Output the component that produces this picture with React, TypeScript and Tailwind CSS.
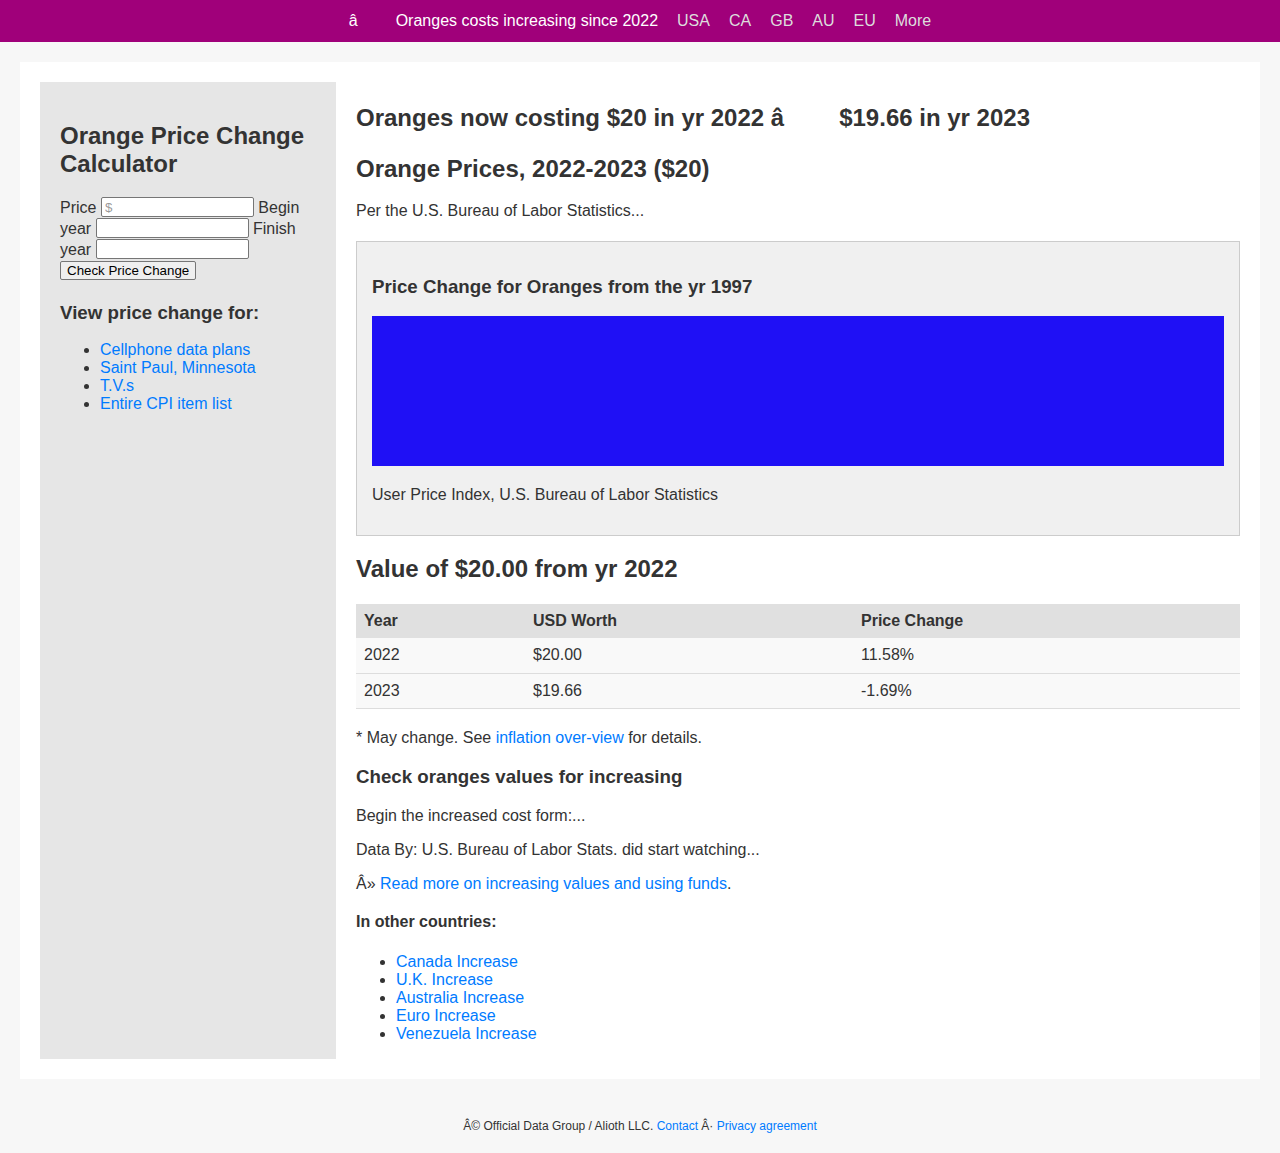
const links = ['Cellphone data plans', 'Saint Paul, Minnesota', 'T.V.s', 'Entire CPI item list'];
const countries = ['Canada Increase', 'U.K. Increase', 'Australia Increase', 'Euro Increase', 'Venezuela Increase'];
const rows = [
  { year: '2022', worth: '$20.00', change: '11.58%' },
  { year: '2023', worth: '$19.66', change: '-1.69%' },
];

function TopBar() {
  return (
    <div className="h-[42px] bg-[#a0007a] flex items-center justify-center text-[16px] leading-[18px]">
      <span className="text-white">â</span>
      <span className="inline-block w-[38px]" />
      <span className="text-white">Oranges costs increasing since 2022</span>
      {['USA', 'CA', 'GB', 'AU', 'EU', 'More'].map((n) => (
        <a key={n} className="ml-[19px] text-[#dddddd]">
          {n}
        </a>
      ))}
    </div>
  );
}

function Sidebar() {
  const input = 'inline-block align-top h-[20px] w-[153px] border border-[#767676] bg-white px-[3px] text-[13.33px] rounded-[2px]';
  return (
    <aside className="w-[296px] shrink-0 bg-[#e6e6e6] px-[20px] pt-[20px]">
      <h2 className="mt-[20px] text-[24px] leading-[28px] font-bold">Orange Price Change Calculator</h2>
      <form className="mt-[19px] text-[16px] leading-[21px]">
        Price <input className={input} placeholder="$" /> Begin year <input className={input} /> Finish year{' '}
        <input className={input} />{' '}
        <button
          type="button"
          className="inline-block align-top mt-[1px] h-[19px] px-[6px] border border-[#767676] bg-[#efefef] rounded-[2px] text-[13.33px] leading-[15px] text-black"
        >
          Check Price Change
        </button>
      </form>
      <h3 className="mt-[21px] text-[18.72px] leading-[22px] font-bold">View price change for:</h3>
      <ul className="mt-[17px] pl-[40px] list-disc leading-[18px]">
        {links.map((l) => (
          <li key={l}>
            <a className="text-[#007bff]">{l}</a>
          </li>
        ))}
      </ul>
    </aside>
  );
}

function Chart() {
  return (
    <div className="mt-[21px] border border-[#cccccc] bg-[#f0f0f0] px-[15px] pb-[31px]">
      <h3 className="mt-[34px] text-[18.72px] leading-[22px] font-bold">Price Change for Oranges from the yr 1997</h3>
      <svg className="mt-[18px] block w-full h-[150px]" preserveAspectRatio="none" viewBox="0 0 100 100">
        <rect x="0" y="0" width="100" height="100" fill="#1f10f5" />
      </svg>
      <p className="mt-[20px] leading-[18px]">User Price Index, U.S. Bureau of Labor Statistics</p>
    </div>
  );
}

function Main() {
  return (
    <main className="flex-1 min-w-0 ml-[20px] text-[16px]">
      <h1 className="mt-[22px] text-[24px] leading-[28px] font-bold whitespace-nowrap">
        Oranges now costing $20 in yr 2022 â<span className="inline-block w-[55px]" />$19.66 in yr 2023
      </h1>
      <h2 className="mt-[23px] text-[24px] leading-[28px] font-bold">Orange Prices, 2022-2023 ($20)</h2>
      <p className="mt-[19px] leading-[18px]">Per the U.S. Bureau of Labor Statistics...</p>
      <Chart />
      <h2 className="mt-[19px] text-[24px] leading-[28px] font-bold">Value of $20.00 from yr 2022</h2>
      <table className="mt-[21px] w-full border-collapse text-left">
        <thead>
          <tr className="bg-[#e0e0e0] h-[34px]">
            <th className="w-[169px] px-[8px] font-bold">Year</th>
            <th className="w-[328px] px-[8px] font-bold">USD Worth</th>
            <th className="px-[8px] font-bold">Price Change</th>
          </tr>
        </thead>
        <tbody>
          {rows.map((r) => (
            <tr key={r.year} className="bg-[#f9f9f9] h-[35px] border-b border-[#dddddd]">
              <td className="px-[8px]">{r.year}</td>
              <td className="px-[8px]">{r.worth}</td>
              <td className="px-[8px]">{r.change}</td>
            </tr>
          ))}
        </tbody>
      </table>
      <p className="mt-[20px] leading-[18px]">
        * May change. See <a className="text-[#007bff]">inflation over-view</a> for details.
      </p>
      <h3 className="mt-[19px] text-[18.72px] leading-[22px] font-bold">Check oranges values for increasing</h3>
      <p className="mt-[19px] leading-[18px]">Begin the increased cost form:...</p>
      <p className="mt-[16px] leading-[18px]">Data By: U.S. Bureau of Labor Stats. did start watching...</p>
      <p className="mt-[16px] leading-[18px]">
        Â» <a className="text-[#007bff]">Read more on increasing values and using funds</a>.
      </p>
      <p className="mt-[20px] leading-[18px] font-bold">In other countries:</p>
      <ul className="mt-[22px] mb-[16px] pl-[40px] list-disc leading-[18px]">
        {countries.map((c) => (
          <li key={c}>
            <a className="text-[#007bff]">{c}</a>
          </li>
        ))}
      </ul>
    </main>
  );
}

export default function App() {
  return (
    <div className="min-h-[1153px] bg-[#f7f7f7] text-[#333333] font-['Liberation_Sans',Arial,sans-serif] text-[16px]">
      <TopBar />
      <div className="px-[20px] pt-[20px]">
        <div className="bg-white p-[20px] flex items-stretch">
          <Sidebar />
          <Main />
        </div>
      </div>
      <footer className="pt-[40px] pb-[21px] text-center text-[12px] leading-[14px]">
        Â© Official Data Group / Alioth LLC. <a className="text-[#007bff]">Contact</a> Â·{' '}
        <a className="text-[#007bff]">Privacy agreement</a>
      </footer>
    </div>
  );
}
